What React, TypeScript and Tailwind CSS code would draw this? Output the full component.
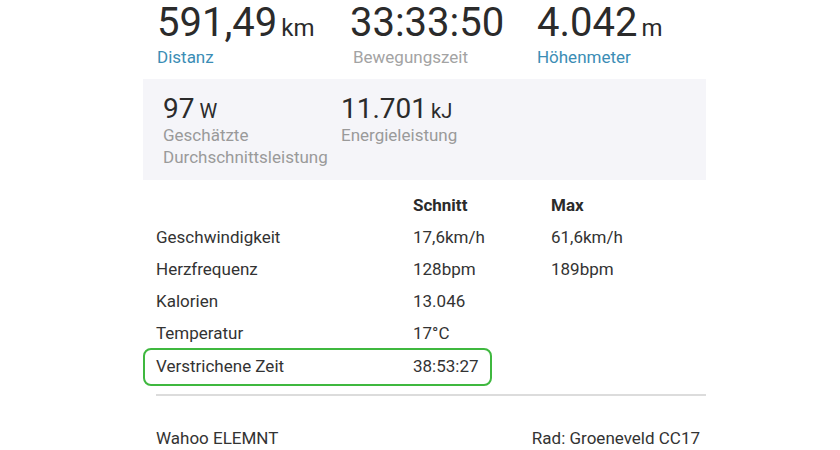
const topStats = [
  { value: '591,49', unit: 'km', label: 'Distanz', labelColor: 'text-[#3b8db5]', width: 'w-[194px]' },
  { value: '33:33:50', unit: '', label: 'Bewegungszeit', labelColor: 'text-[#a3a3a3] pl-[3px]', width: 'w-[188px]' },
  { value: '4.042', unit: 'm', label: 'Höhenmeter', labelColor: 'text-[#3b8db5]', width: 'w-[170px]' },
];

const rows = [
  { label: 'Geschwindigkeit', avg: '17,6km/h', max: '61,6km/h' },
  { label: 'Herzfrequenz', avg: '128bpm', max: '189bpm' },
  { label: 'Kalorien', avg: '13.046', max: '' },
  { label: 'Temperatur', avg: '17°C', max: '' },
];

export default function App() {
  return (
    <div className="w-[840px] h-[450px] bg-white overflow-hidden font-['Roboto',sans-serif] text-[#333]">
      <div className="ml-[143px] w-[563px]">
        {/* top stats */}
        <div className="flex pl-[14px] pt-[3px]">
          {topStats.map((s) => (
            <div key={s.label} className={s.width}>
              <div className="flex items-baseline leading-none">
                <span className="text-[40px] leading-[40px] text-[#2b2b2b]">{s.value}</span>
                {s.unit && <span className="ml-[4px] text-[24px] text-[#2b2b2b]">{s.unit}</span>}
              </div>
              <div className={`mt-[3px] text-[17px] leading-[22px] ${s.labelColor}`}>{s.label}</div>
            </div>
          ))}
        </div>

        {/* gray summary box */}
        <div className="mt-[11px] bg-[#f5f5f9] pl-[20px] pt-[13px] pb-[12px] flex">
          <div className="w-[178px]">
            <div className="flex h-[32px] items-baseline leading-none pt-[3px]">
              <span className="text-[28px] leading-[28px] text-[#2b2b2b]">97</span>
              <span className="ml-[5px] text-[20px] text-[#2b2b2b]">W</span>
            </div>
            <div className="text-[17px] leading-[22px] text-[#9a9a9a]">
              Geschätzte
              <br />
              Durchschnittsleistung
            </div>
          </div>
          <div>
            <div className="flex h-[32px] items-baseline leading-none pt-[3px]">
              <span className="text-[28px] leading-[28px] text-[#2b2b2b]">11.701</span>
              <span className="ml-[4px] text-[20px] text-[#2b2b2b]">kJ</span>
            </div>
            <div className="text-[17px] leading-[22px] text-[#9a9a9a]">Energieleistung</div>
          </div>
        </div>

        {/* table */}
        <div className="mt-[10px] text-[17px]">
          <div className="flex h-[32px] items-center font-bold text-[#2b2b2b]">
            <div className="w-[270px]" />
            <div className="w-[138px]">Schnitt</div>
            <div>Max</div>
          </div>
          {rows.map((r) => (
            <div key={r.label} className="flex h-[32px] items-center pl-[13px]">
              <div className="w-[257px]">{r.label}</div>
              <div className="w-[138px]">{r.avg}</div>
              <div>{r.max}</div>
            </div>
          ))}
          <div className="-mt-[2px] flex h-[38px] w-[349px] items-center rounded-[8px] border-2 border-[#3fb83f] pl-[11px]">
            <div className="w-[257px]">Verstrichene Zeit</div>
            <div>38:53:27</div>
          </div>
        </div>

        <div className="ml-[13px] mt-[8px] h-[2px] bg-[#dcdcdc]" />

        <div className="mt-[31px] flex justify-between pl-[13px] pr-[6px] text-[17px] leading-[22px]">
          <span>Wahoo ELEMNT</span>
          <span>Rad: Groeneveld CC17</span>
        </div>
      </div>
    </div>
  );
}
